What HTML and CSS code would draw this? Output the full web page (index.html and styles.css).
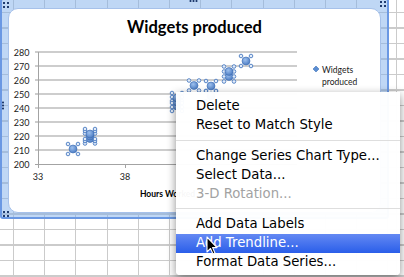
FILE: index.html
```html
<!DOCTYPE html>
<html lang="en">
<head>
    <meta charset="UTF-8">
    <meta name="viewport" content="width=device-width, initial-scale=1.0">
    <title>Widgets produced - chart</title>
    <link rel="stylesheet" href="styles.css">
</head>
<body>
    <div class="sheet">
        <div class="chart-frame">
            <div class="chart">
                <h2 class="chart-title">Widgets produced</h2>
                <svg class="plot" width="371" height="174" viewBox="9 38 371 174">
                    <defs>
                        <radialGradient id="dot" cx="0.4" cy="0.35" r="0.7">
                            <stop offset="0" stop-color="#9dc0ee"/>
                            <stop offset="1" stop-color="#4677c0"/>
                        </radialGradient>
                        <g id="pt">
                            <circle r="4" fill="url(#dot)" stroke="#3f6fb4" stroke-width="0.6"/>
                            <circle class="grip" cx="-5" cy="-5" r="1.8"/>
                            <circle class="grip" cx="5" cy="-5" r="1.8"/>
                            <circle class="grip" cx="-5" cy="5" r="1.8"/>
                            <circle class="grip" cx="5" cy="5" r="1.8"/>
                        </g>
                    </defs>

                    <!-- gridlines -->
                    <g class="gridlines">
                        <line x1="35" x2="297" y1="52" y2="52"/>
                        <line x1="35" x2="297" y1="66" y2="66"/>
                        <line x1="35" x2="297" y1="80" y2="80"/>
                        <line x1="35" x2="297" y1="94" y2="94"/>
                        <line x1="35" x2="297" y1="108" y2="108"/>
                        <line x1="35" x2="297" y1="122" y2="122"/>
                        <line x1="35" x2="297" y1="136" y2="136"/>
                        <line x1="35" x2="297" y1="150" y2="150"/>
                    </g>
                    <g class="axis">
                        <line x1="38.5" x2="38.5" y1="52" y2="168"/>
                        <line x1="35" x2="297" y1="164.5" y2="164.5"/>
                        <line x1="125.5" x2="125.5" y1="164" y2="168"/>
                    </g>

                    <g class="tick-label" text-anchor="end">
                        <text x="29.5" y="55.5">280</text>
                        <text x="29.5" y="69.5">270</text>
                        <text x="29.5" y="83.5">260</text>
                        <text x="29.5" y="97.5">250</text>
                        <text x="29.5" y="111.5">240</text>
                        <text x="29.5" y="125.5">230</text>
                        <text x="29.5" y="139.5">220</text>
                        <text x="29.5" y="153.5">210</text>
                        <text x="29.5" y="167.5">200</text>
                    </g>
                    <g class="tick-label" text-anchor="middle">
                        <text x="38" y="180">33</text>
                        <text x="125" y="180">38</text>
                    </g>
                    <text class="axis-title" x="167.5" y="196.5" text-anchor="middle">Hours Worked</text>

                    <!-- series -->
                    <use href="#pt" x="73" y="149"/>
                    <use href="#pt" x="90" y="138.5"/>
                    <use href="#pt" x="90" y="136"/>
                    <use href="#pt" x="90" y="134"/>
                    <use href="#pt" x="177" y="106"/>
                    <use href="#pt" x="177" y="102"/>
                    <use href="#pt" x="177" y="98"/>
                    <use href="#pt" x="194" y="85.5"/>
                    <use href="#pt" x="211" y="96"/>
                    <use href="#pt" x="211" y="86"/>
                    <use href="#pt" x="229" y="76.5"/>
                    <use href="#pt" x="229" y="71.5"/>
                    <use href="#pt" x="246" y="61"/>

                    <!-- legend -->
                    <polygon class="legend-key" points="316,66 319,69 316,72 313,69"/>
                    <text class="legend-text" x="322" y="72.5">Widgets</text>
                    <text class="legend-text" x="322" y="84.5">produced</text>
                </svg>
            </div>
        </div>

        <span class="handle corner tl"></span>
        <span class="handle corner tr"></span>
        <span class="handle corner bl"></span>
        <span class="handle side-v ml"></span>
        <span class="handle side-h tm"></span>

        <ul class="context-menu">
            <li>Delete</li>
            <li>Reset to Match Style</li>
            <li class="separator"></li>
            <li>Change Series Chart Type...</li>
            <li>Select Data...</li>
            <li class="disabled">3-D Rotation...</li>
            <li class="separator"></li>
            <li>Add Data Labels</li>
            <li class="active">Add Trendline...</li>
            <li>Format Data Series...</li>
        </ul>

        <svg class="cursor" width="12" height="19" viewBox="0 0 12 19">
            <path d="M1 1 V16 L4.5 12.5 L7 18 L9 17 L6.6 11.6 H11 Z" fill="#000" stroke="#fff" stroke-width="1.1" stroke-linejoin="round"/>
        </svg>
    </div>
</body>
</html>
```

FILE: styles.css
```css
* {
    box-sizing: border-box;
}
body {
    margin: 0;
    background-color: #fff;
    font-family: 'Lato', 'Open Sans', sans-serif;
}
.sheet {
    position: relative;
    width: 404px;
    height: 277px;
    overflow: hidden;
    background-color: #fff;
    background-image:
        linear-gradient(to right, transparent 396px, #cbcbcb 396px, #cbcbcb 397px, transparent 397px),
        repeating-linear-gradient(to right, #cbcbcb 0, #cbcbcb 1px, transparent 1px, transparent 31.2px),
        repeating-linear-gradient(to bottom, #cbcbcb 0, #cbcbcb 1px, transparent 1px, transparent 15.5px);
    background-position: 0 0, 13px 0, 0 12px;
}

/* chart object */
.chart-frame {
    width: 389px;
    height: 221px;
    margin-top: -2px;
    padding: 8px 6px 4px 6px;
    border: 2px solid #6a98e3;
    border-radius: 3px;
    background-color: rgba(128, 176, 236, 0.5);
}
.chart {
    height: 100%;
    background-color: #fff;
    border: 1px solid #a6c1ea;
    border-radius: 10px;
}
.chart-title {
    margin: 0;
    padding-top: 8px;
    height: 29px;
    font-size: 16.5px;
    line-height: 21px;
    font-weight: bold;
    text-align: center;
    color: #000;
}
.plot {
    display: block;
}
.gridlines line {
    stroke: #cdcdcd;
    stroke-width: 2;
}
.axis line {
    stroke: #a3a3a3;
    stroke-width: 1;
}
.tick-label text {
    font-size: 9px;
    fill: #1a1a1a;
}
.axis-title {
    font-size: 8.5px;
    font-weight: bold;
    fill: #000;
}
.grip {
    fill: #e4edf9;
    stroke: #4b7cc2;
    stroke-width: 0.9;
}
.legend-key {
    fill: #5b8ed3;
    stroke: #4273b8;
    stroke-width: 0.6;
}
.legend-text {
    font-size: 8.5px;
    fill: #1a1a1a;
}

/* selection handles */
.handle {
    position: absolute;
    background-image: radial-gradient(circle, #1f3b6f 0, #1f3b6f 0.8px, transparent 1.3px);
}
.corner {
    width: 8px;
    height: 8px;
    background-size: 4px 4px;
}
.tl {
    left: 2px;
    top: 1px;
}
.tr {
    left: 379px;
    top: 0;
}
.bl {
    left: 2px;
    top: 210px;
}
.side-v {
    width: 4px;
    height: 9px;
    background-size: 4px 3px;
}
.ml {
    left: 1px;
    top: 101px;
}
.side-h {
    width: 9px;
    height: 4px;
    background-size: 3px 4px;
}
.tm {
    left: 189px;
    top: -1px;
}

/* context menu */
.context-menu {
    position: absolute;
    left: 176px;
    top: 92px;
    width: 224px;
    margin: 0;
    padding: 5px 0 3px 0;
    list-style: none;
    background-color: rgba(255, 255, 255, 0.97);
    border-radius: 0 0 4px 4px;
    box-shadow: 0 3px 10px rgba(0, 0, 0, 0.45);
    font-family: 'DejaVu Sans', 'Liberation Sans', sans-serif;
    font-size: 13.25px;
}
.context-menu li {
    height: 19px;
    padding: 0 0 2px 20px;
    line-height: 17px;
    color: #000;
    white-space: nowrap;
}
.context-menu li.separator {
    height: 1px;
    padding: 0;
    margin: 4.5px 0 6px 0;
    background-color: #dedede;
}
.context-menu li.disabled {
    color: #a2a2a2;
}
.context-menu li.active {
    color: #fff;
    background: linear-gradient(#6489f3, #2a5ee9);
}
.cursor {
    position: absolute;
    left: 206px;
    top: 236px;
}
```
